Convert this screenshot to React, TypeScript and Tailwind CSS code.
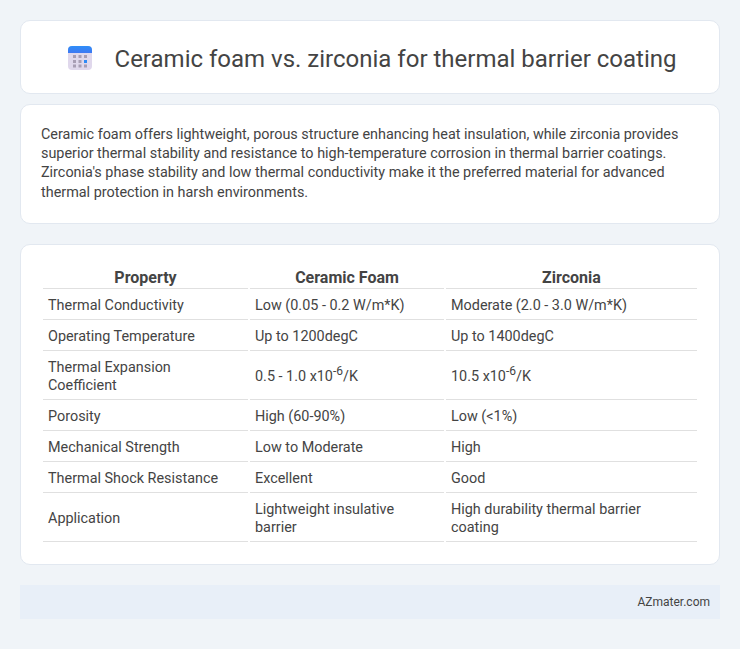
const rows: [React.ReactNode, React.ReactNode, React.ReactNode][] = [
  ["Thermal Conductivity", "Low (0.05 - 0.2 W/m*K)", "Moderate (2.0 - 3.0 W/m*K)"],
  ["Operating Temperature", "Up to 1200degC", "Up to 1400degC"],
  ["Thermal Expansion Coefficient", <>0.5 - 1.0 x10<sup className="text-[12px] top-[-6px]">-6</sup>/K</>, <>10.5 x10<sup className="text-[12px] top-[-6px]">-6</sup>/K</>],
  ["Porosity", "High (60-90%)", "Low (<1%)"],
  ["Mechanical Strength", "Low to Moderate", "High"],
  ["Thermal Shock Resistance", "Excellent", "Good"],
  ["Application", "Lightweight insulative barrier", "High durability thermal barrier coating"],
];

function Icon() {
  return (
    <svg width="24" height="24" viewBox="0 0 24 24" className="shrink-0">
      <defs>
        <linearGradient id="top" x1="0" y1="0" x2="0" y2="1">
          <stop offset="0" stopColor="#2e8ef8" />
          <stop offset="1" stopColor="#3f78f2" />
        </linearGradient>
      </defs>
      <rect x="0" y="0" width="24" height="24" rx="4" fill="#e0d8ec" />
      <path d="M0 7V4a4 4 0 0 1 4-4h16a4 4 0 0 1 4 4v3z" fill="url(#top)" />
      {[5, 10.5, 16].flatMap((x) =>
        [9, 14, 18.5].map((y) => (
          <rect key={`${x}-${y}`} x={x} y={y} width="3" height="3" fill={x === 16 && y === 14 ? "#2f8af5" : "#a89eb4"} />
        ))
      )}
    </svg>
  );
}

export default function App() {
  return (
    <div className="min-h-[649px] bg-[#f0f4f8] p-5 text-[#444] font-['Roboto',sans-serif]">
      <div className="flex flex-col">
        <header className="flex items-center justify-center gap-[23px] h-[74px] bg-white rounded-[10px] border border-[#e2e8f0] pt-[2px] pl-[4px]">
          <Icon />
          <h1 className="text-[24px] font-normal leading-[29px] mt-[2px]">Ceramic foam vs. zirconia for thermal barrier coating</h1>
        </header>
        <section className="mt-[10px] bg-white rounded-[10px] border border-[#e2e8f0] px-5 py-5 h-[120px]">
          <p className="text-[14.4px] leading-[19.2px]">
            Ceramic foam offers lightweight, porous structure enhancing heat insulation, while zirconia provides superior thermal stability and resistance to high-temperature corrosion in thermal barrier coatings. Zirconia's phase stability and low thermal conductivity make it the preferred material for advanced thermal protection in harsh environments.
          </p>
        </section>
        <section className="mt-5 bg-white rounded-[10px] border border-[#e2e8f0] px-5 py-5">
          <table className="w-full border-separate border-spacing-[2px] text-[14.4px] leading-[18px] table-fixed">
            <colgroup>
              <col className="w-[205px]" />
              <col className="w-[194px]" />
              <col />
            </colgroup>
            <thead>
              <tr>
                <th className="font-bold text-center border-b border-[#e0e0e0] pt-px pb-px text-[16px] leading-[19px]">Property</th>
                <th className="font-bold text-center border-b border-[#e0e0e0] pt-px pb-px text-[16px] leading-[19px]">Ceramic Foam</th>
                <th className="font-bold text-center border-b border-[#e0e0e0] pt-px pb-px text-[16px] leading-[19px]">Zirconia</th>
              </tr>
            </thead>
            <tbody>
              {rows.map((r, i) => (
                <tr key={i}>
                  {r.map((c, j) => (
                    <td key={j} className="border-b border-[#e0e0e0] px-[5px] pt-[6px] pb-[4px] align-middle">{c}</td>
                  ))}
                </tr>
              ))}
            </tbody>
          </table>
        </section>
        <footer className="mt-5 h-[34px] bg-[#e8eff8] flex items-center justify-end px-[10px] text-[12px]">AZmater.com</footer>
      </div>
    </div>
  );
}
